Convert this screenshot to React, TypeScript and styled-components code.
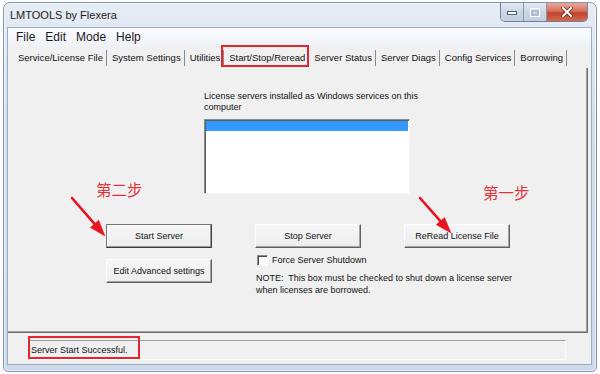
import styled, { createGlobalStyle, css } from "styled-components";

const GlobalStyle = createGlobalStyle`
  html, body {
    margin: 0;
    padding: 0;
    background: #fff;
  }
  body {
    font-family: "Liberation Sans", Arial, sans-serif;
    color: #111;
  }
`;

const Window = styled.div`
  box-sizing: border-box;
  width: 594px;
  height: 370px;
  margin: 2px 0 0 3px;
  padding: 0 5px 7px 4px;
  display: flex;
  flex-direction: column;
  border: 1px solid #7f95b0;
  border-radius: 7px 7px 5px 5px;
  background: linear-gradient(180deg, #e6ecf4 0%, #d6e0ec 30%, #cddaea 100%);
  box-shadow: inset 0 0 0 1px rgba(255, 255, 255, 0.6);
`;

const TitleBar = styled.div`
  height: 25px;
  display: flex;
  align-items: flex-start;
  flex-shrink: 0;
`;

const Title = styled.span`
  padding-left: 2px;
  font-size: 11px;
  line-height: 25px;
  color: #1c1c1c;
`;

const Controls = styled.div`
  margin-left: auto;
  margin-right: 3px;
  display: flex;
  height: 18px;
  border: 1px solid #6f819a;
  border-top: none;
  border-radius: 0 0 5px 5px;
  overflow: hidden;
`;

const CtrlButton = styled.div<{ $close?: boolean }>`
  width: ${(p) => (p.$close ? "40px" : "22px")};
  display: flex;
  align-items: center;
  justify-content: center;
  border-left: 1px solid #8596ad;
  background: linear-gradient(180deg, #e3eaf3 0%, #ccd7e5 50%, #c2cfdf 100%);
  ${(p) =>
    p.$close &&
    css`
      background: linear-gradient(180deg, #e9a99b 0%, #d7705c 45%, #c4432b 55%, #d06a4f 100%);
    `}
  &:first-child {
    border-left: none;
  }
`;

const Client = styled.div`
  flex: 1;
  display: flex;
  flex-direction: column;
  background: #f0f0f0;
  box-shadow: 0 0 0 1px #9aadc5;
`;

const MenuBar = styled.div`
  height: 18px;
  display: flex;
  align-items: center;
  padding-left: 3px;
  background: linear-gradient(180deg, #fbfcfe 0%, #eef2f7 100%);
`;

const MenuItem = styled.span`
  padding: 0 5px;
  font-size: 12px;
  color: #1b1b1b;
`;

const TabStrip = styled.div`
  height: 22px;
  box-sizing: border-box;
  display: flex;
  align-items: flex-start;
  padding: 4px 0 0 5px;
`;

const Tab = styled.span<{ $marked?: boolean }>`
  position: relative;
  height: 16px;
  line-height: 16px;
  padding: 0 3px 0 5px;
  border-right: 1px solid #8a8a8a;
  font-size: 9.5px;
  color: #111;
  white-space: nowrap;
  ${(p) =>
    p.$marked &&
    css`
      border-right-color: transparent;
      &::after {
        content: "";
        position: absolute;
        top: -5px;
        left: -3px;
        right: -1px;
        bottom: -1px;
        border: 2px solid #e2262f;
      }
    `}
`;

const TabPage = styled.div`
  position: relative;
  flex: 1;
  margin-right: 3px;
  border-right: 1px solid #6e6e6e;
  border-bottom: 1px solid #6e6e6e;
  box-shadow: inset -1px -1px 0 #a0a0a0;
`;

const ListGroup = styled.div`
  margin: 23px 0 0 196px;
`;

const Label = styled.div`
  font-size: 9px;
  line-height: 11px;
  white-space: nowrap;
`;

const ListBox = styled.div`
  box-sizing: border-box;
  width: 206px;
  height: 75px;
  margin-top: 6px;
  background: #fff;
  border: 1px solid;
  border-color: #8a8a8a #f4f4f4 #f4f4f4 #8a8a8a;
  box-shadow: inset 1px 1px 0 #5e5e5e;
  padding: 1px 1px 0 1px;
`;

const ListRow = styled.div<{ $selected?: boolean }>`
  height: 10px;
  background: ${(p) => (p.$selected ? "#3399ff" : "transparent")};
`;

const ButtonGrid = styled.div`
  margin: 30px 0 0 98px;
  display: grid;
  grid-template-columns: 106px 106px 106px;
  column-gap: 43px;
  grid-template-areas:
    "start stop reread"
    "edit force force"
    "edit note note";
`;

const Button = styled.div<{ $area: string; $default?: boolean }>`
  grid-area: ${(p) => p.$area};
  box-sizing: border-box;
  height: 24px;
  display: flex;
  align-items: center;
  justify-content: center;
  font-size: 9px;
  color: #111;
  background: linear-gradient(180deg, #f6f6f6 0%, #ededed 100%);
  border: 1px solid;
  border-color: #fdfdfd #5f5f5f #5f5f5f #fdfdfd;
  box-shadow: inset -1px -1px 0 #a3a3a3;
  ${(p) =>
    p.$default &&
    css`
      border-color: #777 #3c3c3c #3c3c3c #777;
      box-shadow: inset -1px -1px 0 #9a9a9a, inset 1px 1px 0 #fafafa;
    `}
`;

const EditButton = styled(Button)`
  margin-top: 11px;
  align-self: start;
`;

const ForceRow = styled.div`
  grid-area: force;
  margin: 7px 0 0 2px;
  display: flex;
  align-items: center;
  gap: 4px;
  font-size: 9px;
  line-height: 11px;
`;

const CheckBox = styled.span`
  box-sizing: border-box;
  width: 11px;
  height: 11px;
  background: #fbfbfb;
  border: 1px solid;
  border-color: #8c8c8c #fff #fff #8c8c8c;
  box-shadow: inset 1px 1px 0 #4a4a4a;
`;

const Note = styled.div`
  grid-area: note;
  margin: 6px 0 0 1px;
  font-size: 9px;
  line-height: 12px;
  white-space: nowrap;
`;

const StatusBar = styled.div`
  height: 31px;
  box-sizing: border-box;
  padding: 7px 0 0 20px;
`;

const StatusField = styled.div`
  box-sizing: border-box;
  width: 538px;
  height: 20px;
  display: flex;
  align-items: center;
  padding-left: 2px;
  border: 1px solid;
  border-color: #a0a0a0 #fbfbfb #fbfbfb #a0a0a0;
`;

const StatusText = styled.span`
  position: relative;
  font-size: 9px;
  &::after {
    content: "";
    position: absolute;
    top: -9px;
    left: -3px;
    right: -12px;
    bottom: -4px;
    border: 2px solid #e2262f;
  }
`;

const Note2 = styled.span`
  position: absolute;
  font-family: "Noto Sans CJK SC", sans-serif;
  font-size: 15.5px;
  line-height: 16px;
  color: #e5333d;
  pointer-events: none;
`;

const Overlay = styled.svg`
  position: absolute;
  inset: 0;
  width: 100%;
  height: 100%;
  pointer-events: none;
  overflow: visible;
`;

function Arrow({ x1, y1, x2, y2 }: { x1: number; y1: number; x2: number; y2: number }) {
  const dx = x2 - x1;
  const dy = y2 - y1;
  const len = Math.hypot(dx, dy);
  const ux = dx / len;
  const uy = dy / len;
  const bx = x2 - ux * 16;
  const by = y2 - uy * 16;
  const px = -uy * 5.5;
  const py = ux * 5.5;
  return (
    <g fill="#e8131f" stroke="#e8131f">
      <line x1={x1} y1={y1} x2={bx} y2={by} strokeWidth={2.6} strokeLinecap="round" />
      <polygon
        points={`${x2},${y2} ${bx + px},${by + py} ${bx - px},${by - py}`}
        strokeWidth={0.5}
      />
    </g>
  );
}

const tabs = [
  "Service/License File",
  "System Settings",
  "Utilities",
  "Start/Stop/Reread",
  "Server Status",
  "Server Diags",
  "Config Services",
  "Borrowing",
];

export default function App() {
  return (
    <>
      <GlobalStyle />
      <Window>
        <TitleBar>
          <Title>LMTOOLS by Flexera</Title>
          <Controls>
            <CtrlButton>
              <svg width="10" height="6" viewBox="0 0 10 6">
                <rect x="0.5" y="2.5" width="9" height="3" fill="#fff" stroke="#50607a" />
              </svg>
            </CtrlButton>
            <CtrlButton>
              <svg width="10" height="9" viewBox="0 0 10 9">
                <rect x="0.5" y="0.5" width="9" height="8" fill="none" stroke="#fff" strokeWidth="1" />
                <rect x="2" y="3" width="6" height="4" fill="none" stroke="#8a98ac" strokeWidth="0.8" />
              </svg>
            </CtrlButton>
            <CtrlButton $close>
              <svg width="12" height="10" viewBox="0 0 12 10">
                <path d="M2 1 L10 9 M10 1 L2 9" stroke="#5a2418" strokeWidth="3.4" strokeLinecap="square" />
                <path d="M2 1 L10 9 M10 1 L2 9" stroke="#fff" strokeWidth="2" strokeLinecap="square" />
              </svg>
            </CtrlButton>
          </Controls>
        </TitleBar>
        <Client>
          <MenuBar>
            <MenuItem>File</MenuItem>
            <MenuItem>Edit</MenuItem>
            <MenuItem>Mode</MenuItem>
            <MenuItem>Help</MenuItem>
          </MenuBar>
          <TabStrip>
            {tabs.map((t) => (
              <Tab key={t} $marked={t === "Start/Stop/Reread"}>
                {t}
              </Tab>
            ))}
          </TabStrip>
          <TabPage>
            <ListGroup>
              <Label>
                License servers installed as Windows services on this
                <br />
                computer
              </Label>
              <ListBox>
                <ListRow $selected />
              </ListBox>
            </ListGroup>
            <ButtonGrid>
              <Button $area="start" $default>
                Start Server
              </Button>
              <Button $area="stop">Stop Server</Button>
              <Button $area="reread">ReRead License File</Button>
              <EditButton $area="edit">Edit Advanced settings</EditButton>
              <ForceRow>
                <CheckBox />
                Force Server Shutdown
              </ForceRow>
              <Note>
                NOTE:&nbsp; This box must be checked to shut down a license server
                <br />
                when licenses are borrowed.
              </Note>
            </ButtonGrid>
            <Note2 style={{ left: 88, top: 113 }}>第二步</Note2>
            <Note2 style={{ left: 475, top: 116 }}>第一步</Note2>
            <Overlay>
              <Arrow x1={64} y1={130} x2={97} y2={168} />
              <Arrow x1={412} y1={130} x2={443} y2={165} />
            </Overlay>
          </TabPage>
          <StatusBar>
            <StatusField>
              <StatusText>Server Start Successful.</StatusText>
            </StatusField>
          </StatusBar>
        </Client>
      </Window>
    </>
  );
}
